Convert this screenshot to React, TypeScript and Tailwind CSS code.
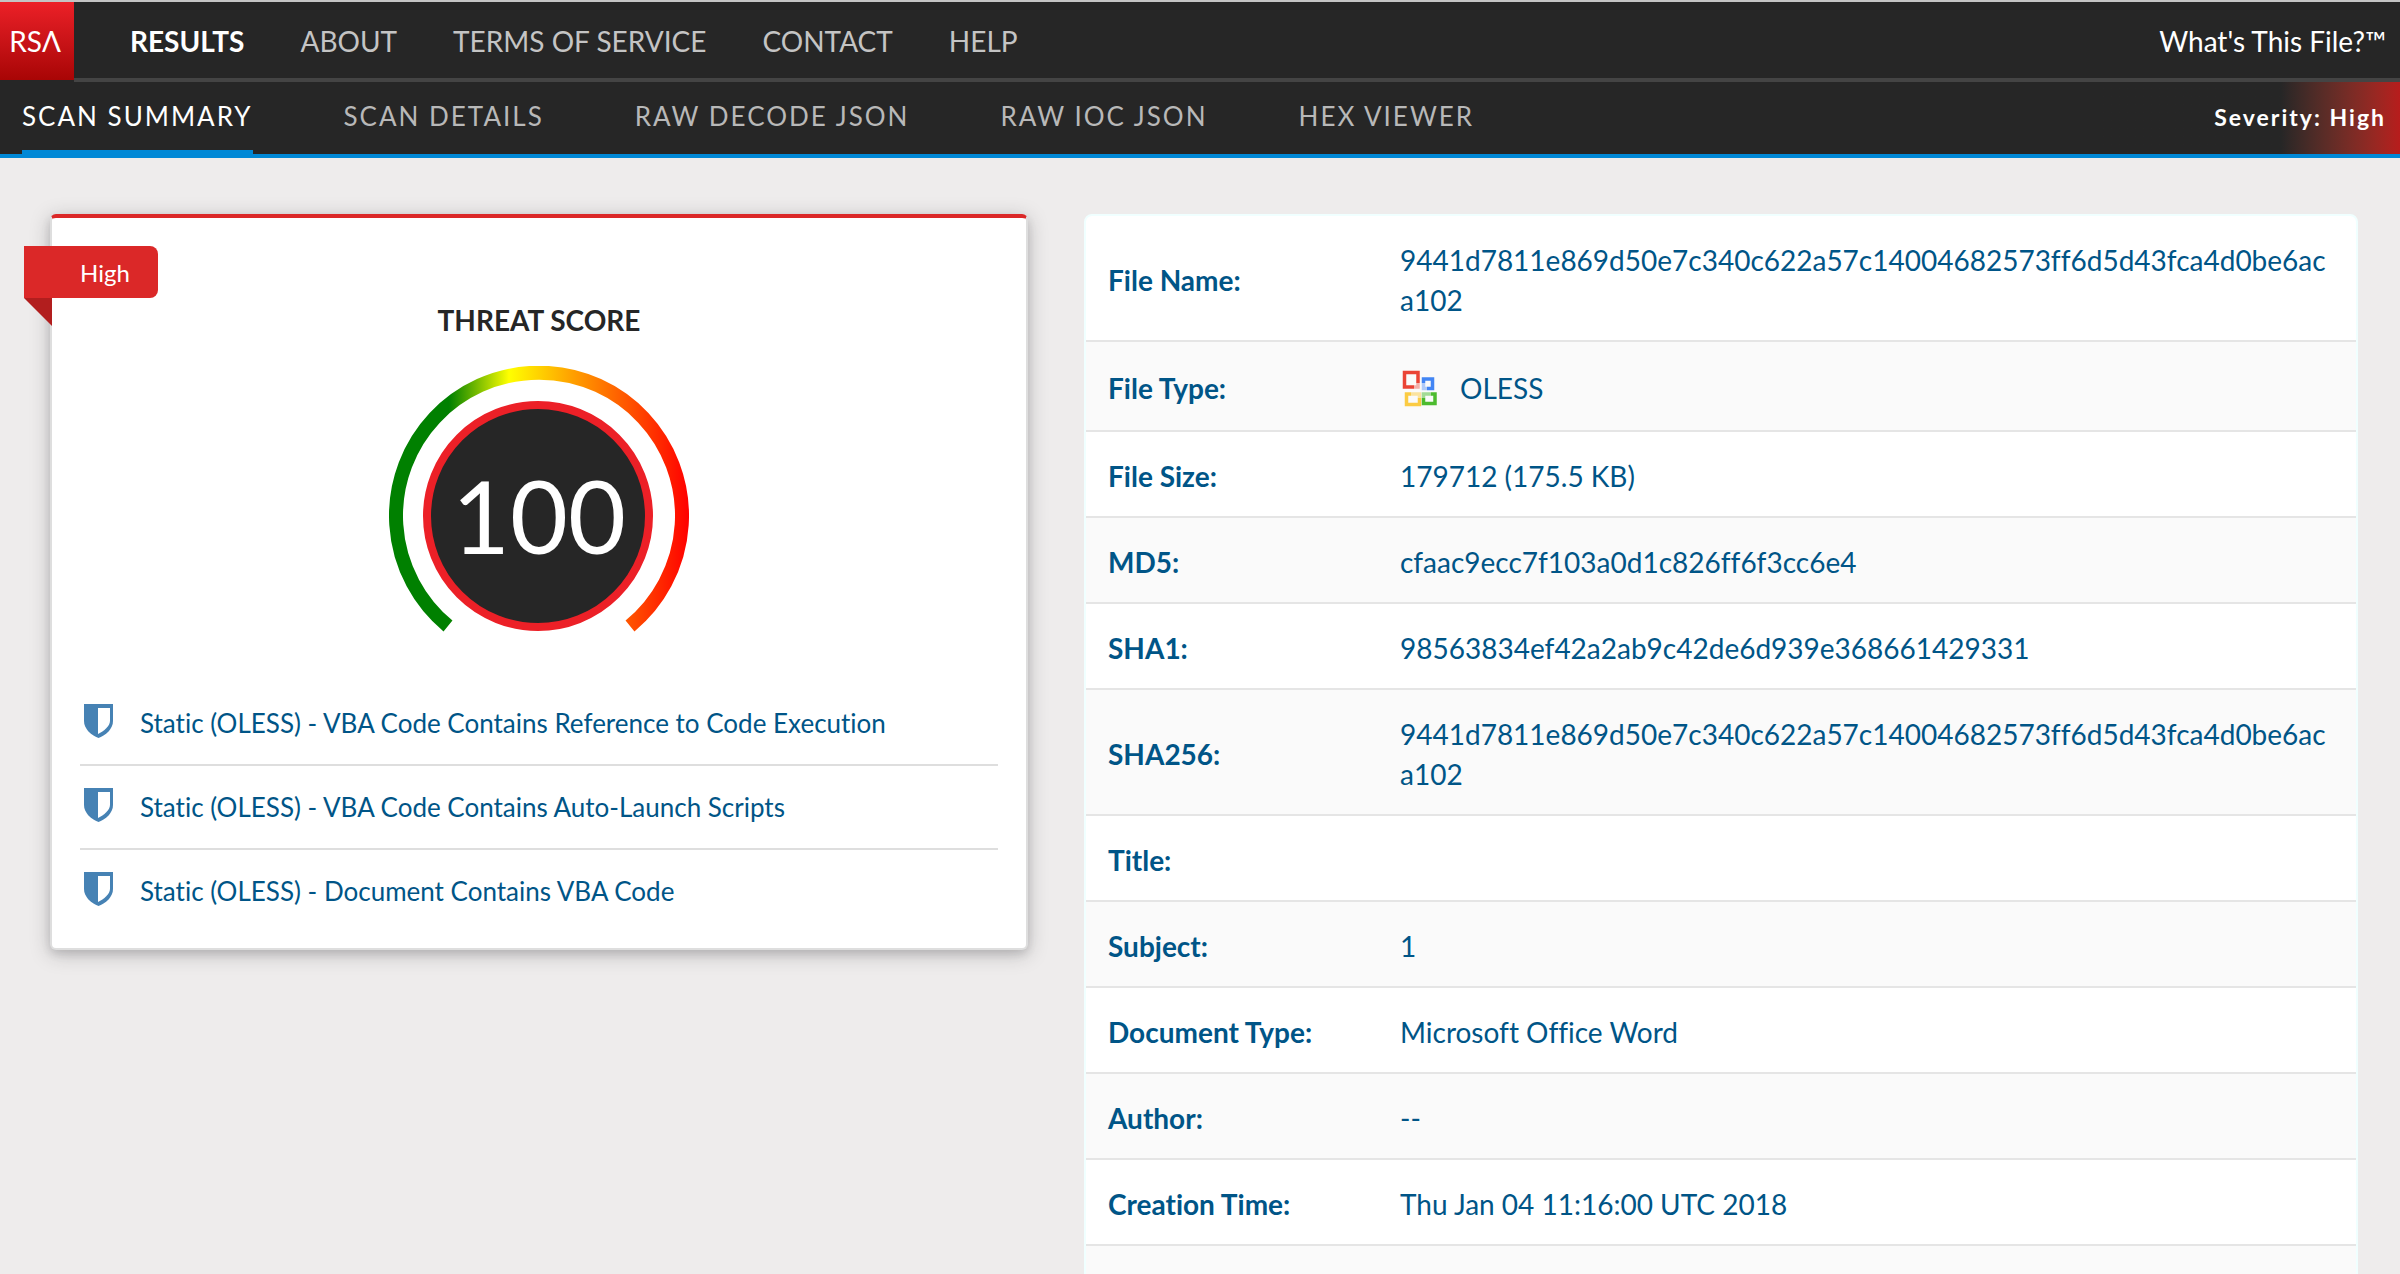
import React from "react";

const mainLinks = ["RESULTS", "ABOUT", "TERMS OF SERVICE", "CONTACT", "HELP"];

const tabs = [
  "SCAN SUMMARY",
  "SCAN DETAILS",
  "RAW DECODE JSON",
  "RAW IOC JSON",
  "HEX VIEWER",
];

const findings = [
  "Static (OLESS) - VBA Code Contains Reference to Code Execution",
  "Static (OLESS) - VBA Code Contains Auto-Launch Scripts",
  "Static (OLESS) - Document Contains VBA Code",
];

const hash = "9441d7811e869d50e7c340c622a57c14004682573ff6d5d43fca4d0be6aca102";

const details = [
  { label: "File Name:", value: hash },
  { label: "File Type:", value: "OLESS", icon: true },
  { label: "File Size:", value: "179712 (175.5 KB)" },
  { label: "MD5:", value: "cfaac9ecc7f103a0d1c826ff6f3cc6e4" },
  { label: "SHA1:", value: "98563834ef42a2ab9c42de6d939e368661429331" },
  { label: "SHA256:", value: hash },
  { label: "Title:", value: "" },
  { label: "Subject:", value: "1" },
  { label: "Document Type:", value: "Microsoft Office Word" },
  { label: "Author:", value: "--" },
  { label: "Creation Time:", value: "Thu Jan 04 11:16:00 UTC 2018" },
  { label: "", value: "" },
];

function ShieldIcon() {
  return (
    <svg viewBox="0 0 30 34" className="mb-1 h-[34px] w-[30px] shrink-0" aria-hidden="true">
      <path
        d="M0 0H29V17C29 25 22 31 14.5 34C7 31 0 25 0 17Z"
        fill="#4682b4"
      />
      <path d="M14 4H26V17C26 22 20 27 14 30Z" fill="#fff" />
    </svg>
  );
}

function OfficeIcon() {
  return (
    <svg viewBox="0 -1 40 40" className="h-10 w-10 shrink-0" fill="none" strokeWidth="3.5" aria-hidden="true">
      <path d="M14 18H4.5V3.5H18V14" stroke="#ea4335" />
      <path d="M23.5 14V10H32.5V19.5H27" stroke="#4285f4" />
      <path d="M11 25H6.5V35.5H19.5V29" stroke="#fbcb43" />
      <path d="M23.5 29V34.5H35V25H31" stroke="#4cbb2f" />
      <path d="M14 18H18V14" stroke="#ea4335" strokeOpacity="0.4" />
      <path d="M23.5 14V19.5H27" stroke="#4285f4" strokeOpacity="0.4" />
      <path d="M11 25H19.5V29" stroke="#fbcb43" strokeOpacity="0.5" />
      <path d="M23.5 29V25H31" stroke="#4cbb2f" strokeOpacity="0.5" />
    </svg>
  );
}

function Gauge() {
  return (
    <svg viewBox="0 0 300 270" className="h-[270px] w-[300px]" role="img" aria-label="Threat score 100">
      <defs>
        <linearGradient id="scale" gradientUnits="userSpaceOnUse" x1="0" y1="0" x2="300" y2="0">
          <stop offset="0.2" stopColor="green" />
          <stop offset="0.4" stopColor="yellow" />
          <stop offset="0.6" stopColor="orange" />
          <stop offset="1" stopColor="red" />
        </linearGradient>
      </defs>
      <path
        d="M59 260A143 143 0 1 1 241 260"
        fill="none"
        stroke="url(#scale)"
        strokeWidth="14"
      />
      <circle cx="149" cy="150" r="111" fill="#262626" stroke="#ec2027" strokeWidth="8" />
      <text x="150" y="188" textAnchor="middle" fontSize="100" fill="#fff">
        100
      </text>
    </svg>
  );
}

export default function App() {
  return (
    <div className="h-screen overflow-hidden bg-[#eeecec] font-['Lato',sans-serif] text-[28px] leading-10 [font-variant-ligatures:none]">
      <header className="bg-[#262626] border-t-2 border-[#c4c4c4]">
        <div className="flex h-20 items-stretch">
          <a
            href="#home"
            aria-label="RSA"
            className="flex h-[78px] w-[74px] items-center justify-center bg-linear-to-b from-[#ec2027] to-[#a80505] pr-1 text-white"
          >
            RSΛ
          </a>
          <div className="flex grow items-center justify-between border-b-4 border-[#444] pt-0.5 pr-3.5 pl-14">
            <nav className="flex gap-14">
              {mainLinks.map((link, i) => (
                <a
                  key={link}
                  href="#main"
                  className={i === 0 ? "font-bold text-white" : "text-[#c4c4c4]"}
                >
                  {link}
                </a>
              ))}
            </nav>
            <span className="text-white">What's This File?™</span>
          </div>
        </div>
        <div className="flex h-[76px] justify-between border-b-4 border-[#0088d6] pl-[22px]">
          <nav className="flex gap-[91px] text-[26px] tracking-[2px]">
            {tabs.map((tab, i) => (
              <a
                key={tab}
                href="#tab"
                className={
                  i === 0
                    ? "border-b-4 border-[#0088d6] pt-3.5 text-white"
                    : "border-b-4 border-transparent pt-3.5 text-[#b8b8b8]"
                }
              >
                {tab}
              </a>
            ))}
          </nav>
          <div className="flex items-center bg-linear-to-r from-[#262626] from-60% to-[#b71c1c] pr-3.5 pb-0.5 pl-28 text-[23px] font-bold tracking-[2px] text-white">
            Severity: High
          </div>
        </div>
      </header>

      <main className="grid grid-cols-[978fr_1274fr] items-start gap-14 pt-14 pr-[42px] pl-[50px]">
        <section className="relative rounded-md border-2 border-t-4 border-[#dedede] border-t-[#db2828] bg-white px-7 pt-[82px] pb-3.5 shadow-[0_4px_8px_0_rgba(34,36,38,0.12),0_4px_20px_0_rgba(34,36,38,0.25)]">
          <div className="absolute top-7 -left-7 flex h-[52px] w-[134px] items-center rounded-r-lg bg-[#db2828] pt-0.5 pl-14 text-[24px] text-white">
            High
          </div>
          <div className="absolute top-20 -left-7 h-7 w-7 bg-[#b21e1e] [clip-path:polygon(0_0,100%_0,100%_100%)]" />
          <div className="flex flex-col items-center">
            <h2 className="font-bold text-[#262626]">THREAT SCORE</h2>
            <div className="mt-[26px]">
              <Gauge />
            </div>
          </div>
          <ul className="mt-[46px] text-[26px] text-[#005587]">
            {findings.map((finding) => (
              <li
                key={finding}
                className="flex h-[84px] items-center gap-[26px] border-b-2 border-[#dedede] pl-1 last:border-transparent"
              >
                <ShieldIcon />
                <a href="#finding">{finding}</a>
              </li>
            ))}
          </ul>
        </section>

        <div className="overflow-hidden rounded-lg border-2 border-[#f0ffff] bg-white">
          <table className="w-full border-collapse text-left text-[#005587]">
            <tbody>
              {details.map((row, i) => (
                <tr key={i} className="border-b-2 border-[#e5e5e5] even:bg-[#fafafa]">
                  <th scope="row" className="w-[292px] px-[22px] pt-6 pb-5 font-bold">
                    {row.label}
                  </th>
                  <td className="h-[86px] px-[22px] pt-6 pb-5 break-all">
                    {row.icon ? (
                      <span className="flex h-11 items-center gap-5">
                        <OfficeIcon />
                        {row.value}
                      </span>
                    ) : (
                      row.value
                    )}
                  </td>
                </tr>
              ))}
            </tbody>
          </table>
        </div>
      </main>
    </div>
  );
}
